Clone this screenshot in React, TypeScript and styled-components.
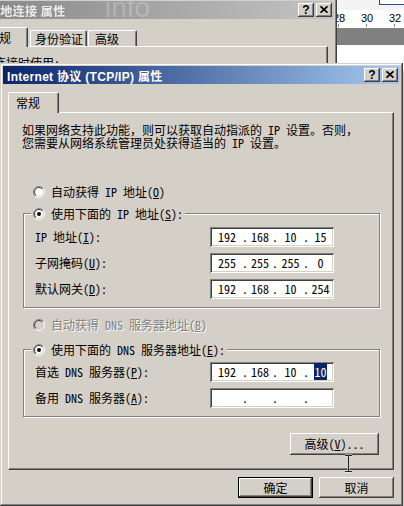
import React from "react";
import styled, { createGlobalStyle, css } from "styled-components";

const FACE = "#d4d0c8";
const UI_FONT = `"Noto Sans Mono CJK SC", "Noto Sans CJK SC", "Liberation Sans", sans-serif`;
const CAPTION_FONT = `"Liberation Sans", "Noto Sans CJK SC", sans-serif`;

const GlobalStyle = createGlobalStyle`
  *, *::before, *::after { box-sizing: border-box; }
  html, body { margin: 0; padding: 0; background: ${FACE}; }
  body { font-family: ${UI_FONT}; font-size: 12px; color: #000; }
`;

const raised = css`
  box-shadow: inset -1px -1px #404040, inset 1px 1px #ffffff, inset -2px -2px #808080, inset 2px 2px ${FACE};
`;
const sunken = css`
  box-shadow: inset 1px 1px #808080, inset -1px -1px #ffffff, inset 2px 2px #404040, inset -2px -2px ${FACE};
`;

const Desktop = styled.div`
  position: relative;
  width: 404px;
  height: 506px;
  overflow: hidden;
  background: ${FACE};
`;

/* ---------- window far behind, on the right (ruler) ---------- */
const SideWindow = styled.div`
  position: absolute;
  left: 325px;
  top: 0;
  width: 80px;
  height: 70px;
  background: #fff;
  display: flex;
  flex-direction: column;
`;
const SideTopStrip = styled.div`
  height: 10px;
  flex: none;
  display: flex;
  justify-content: flex-end;
  background: #f4f4f4;
`;
const SelectionBox = styled.div`
  width: 26px;
  height: 5px;
  border: 1px solid #24459c;
  border-top: none;
  background: #fff;
`;
const Ruler = styled.div`
  height: 18px;
  flex: none;
  display: grid;
  grid-template-columns: repeat(3, 28px);
  background: #fff;
`;
const RulerMark = styled.div`
  position: relative;
  text-align: center;
  font: 11px "Liberation Sans", sans-serif;
  line-height: 14px;
  padding-top: 1px;
  &::after {
    content: "";
    position: absolute;
    left: 13px;
    bottom: 1px;
    width: 1px;
    height: 3px;
    background: #808080;
  }
`;
const GrayBand = styled.div`
  height: 17px;
  flex: none;
  background: #808080;
`;

/* ---------- shared window parts ---------- */
const TitleBar = styled.div<{ $active?: boolean }>`
  position: relative;
  height: 18px;
  flex: none;
  display: flex;
  align-items: center;
  gap: 2px;
  padding: 0 2px 0 ${(p) => (p.$active ? 4 : 25)}px;
  background: ${(p) =>
    p.$active
      ? "linear-gradient(to right, #0a246a, #a6caf0)"
      : "linear-gradient(to right, #848484, #c4c4c4)"};
  overflow: hidden;
`;
const TitleText = styled.span<{ $active?: boolean }>`
  flex: 1;
  font: bold 12px ${CAPTION_FONT};
  letter-spacing: 0.3px;
  white-space: nowrap;
  color: ${(p) => (p.$active ? "#ffffff" : "#ececec")};
  ${(p) => !p.$active && "filter: blur(0.7px);"}
`;
const Watermark = styled.span`
  position: absolute;
  left: 142px;
  top: -9px;
  font: 28px "Liberation Sans", sans-serif;
  color: rgba(255, 255, 255, 0.22);
  pointer-events: none;
`;
const CaptionButton = styled.div`
  width: 16px;
  height: 14px;
  flex: none;
  background: ${FACE};
  ${raised};
  display: flex;
  align-items: center;
  justify-content: center;
  font: bold 12px "Liberation Sans", sans-serif;
  line-height: 1;
  color: #000;
  padding-bottom: 1px;
`;

const TabRow = styled.div<{ $h: number }>`
  position: relative;
  z-index: 1;
  flex: none;
  display: flex;
  align-items: flex-end;
  height: ${(p) => p.$h}px;
`;
const Tab = styled.div<{ $w: number; $h: number; $pad: number; $ml?: number; $selected?: boolean }>`
  width: ${(p) => p.$w}px;
  height: ${(p) => p.$h}px;
  margin-left: ${(p) => p.$ml ?? 0}px;
  margin-bottom: ${(p) => (p.$selected ? -1 : 0)}px;
  padding-left: ${(p) => p.$pad}px;
  display: flex;
  align-items: center;
  background: ${FACE};
  border-top: 1px solid #fff;
  border-left: 1px solid #fff;
  border-right: 1px solid #404040;
  border-radius: 2px 2px 0 0;
  box-shadow: inset -1px 0 #808080;
  line-height: 12px;
  white-space: nowrap;
`;
const TabPanel = styled.div`
  background: ${FACE};
  border-style: solid;
  border-width: 1px;
  border-color: #fff #404040 #404040 #fff;
  box-shadow: inset -1px -1px #808080;
  display: flex;
  flex-direction: column;
`;

/* ---------- background window ---------- */
const BackWindow = styled.div`
  position: absolute;
  left: -40px;
  top: -2px;
  width: 377px;
  height: 100px;
  padding: 3px;
  background: ${FACE};
  box-shadow: inset -1px -1px #404040, inset -2px -2px #808080;
  display: flex;
  flex-direction: column;
  z-index: 1;
`;
const BackBody = styled.div`
  flex: 1;
  display: flex;
  flex-direction: column;
  padding: 8px 6px 0 14px;
`;
const BackPanel = styled(TabPanel)`
  flex: 1;
  padding: 10px 0 0 16px;
`;
const BackCaption = styled.div`
  line-height: 12px;
  white-space: nowrap;
`;

/* ---------- front dialog ---------- */
const Dialog = styled.div`
  position: absolute;
  left: 0;
  top: 63px;
  width: 403px;
  height: 443px;
  padding: 3px;
  background: ${FACE};
  box-shadow: inset -1px -1px #404040, inset 1px 1px ${FACE}, inset -2px -2px #808080, inset 2px 2px #fff;
  display: flex;
  flex-direction: column;
  z-index: 2;
`;
const DialogBody = styled.div`
  display: flex;
  flex-direction: column;
  padding: 8px 6px 0 5px;
`;
const FrontPanel = styled(TabPanel)`
  height: 358px;
  padding: 10px 13px 0 13px;
`;
const Intro = styled.p`
  margin: 0;
  line-height: 13px;
  white-space: nowrap;
`;
const RadioRow = styled.div<{ $mt: number; $disabled?: boolean }>`
  display: flex;
  align-items: center;
  gap: 6px;
  height: 14px;
  margin-top: ${(p) => p.$mt}px;
  padding-left: 11px;
  line-height: 14px;
  white-space: nowrap;
  color: ${(p) => (p.$disabled ? "#808080" : "#000")};
  ${(p) => p.$disabled && "text-shadow: 1px 1px 0 #fff;"}
`;
const Group = styled.fieldset<{ $mt: number; $pt: number }>`
  margin: ${(p) => p.$mt}px 0 0 1px;
  padding: ${(p) => p.$pt}px 0 8px 11px;
  min-width: 0;
  border: 1px solid #808080;
  box-shadow: 1px 1px 0 #fff, inset 1px 1px 0 #fff;
`;
const GroupLegend = styled.legend`
  height: 14px;
  padding: 0 2px;
  margin-left: -4px;
  background: ${FACE};
`;
const LegendLabel = styled.span`
  display: inline-flex;
  align-items: center;
  gap: 6px;
  height: 14px;
  line-height: 14px;
  white-space: nowrap;
`;
const FieldGrid = styled.div`
  display: grid;
  grid-template-columns: 175px 124px;
  row-gap: 6px;
  align-items: center;
`;
const FieldLabel = styled.span`
  white-space: nowrap;
  line-height: 14px;
`;
const Key = styled.u`
  text-underline-offset: 1px;
`;
const IPBox = styled.div`
  width: 124px;
  height: 20px;
  background: #fff;
  ${sunken};
  display: grid;
  grid-template-columns: 30px 6px 24px 6px 25px 6px 23px;
  align-items: center;
  padding-left: 2px;
  line-height: 14px;
`;
const Octet = styled.span`
  text-align: center;
  white-space: nowrap;
`;
const Dot = styled.span`
  text-align: center;
`;
const Selection = styled.span`
  background: #0a246a;
  color: #fff;
`;
const AdvancedRow = styled.div`
  display: flex;
  justify-content: flex-end;
  margin: 16px 1px 0 0;
`;
const PushButton = styled.button<{ $w: number; $h: number; $default?: boolean }>`
  width: ${(p) => p.$w}px;
  height: ${(p) => p.$h}px;
  padding: 0;
  margin: 0;
  font: inherit;
  color: #000;
  background: ${FACE};
  display: flex;
  align-items: center;
  justify-content: center;
  line-height: 14px;
  white-space: nowrap;
  border: ${(p) => (p.$default ? "1px solid #000" : "none")};
  ${raised};
`;
const ButtonRow = styled.div`
  display: flex;
  justify-content: flex-end;
  gap: 6px;
  margin-top: 7px;
`;
const Cursor = styled.svg`
  position: absolute;
  left: 344px;
  top: 454px;
  z-index: 3;
`;

/* ---------- icons ---------- */
const RadioIcon: React.FC<{ checked?: boolean; disabled?: boolean }> = ({ checked, disabled }) => (
  <svg width="12" height="12" viewBox="0 0 12 12" style={{ flex: "none" }}>
    <defs>
      <linearGradient id="radioOuter" x1="0" y1="0" x2="1" y2="1">
        <stop offset="0.5" stopColor="#808080" />
        <stop offset="0.5" stopColor="#ffffff" />
      </linearGradient>
      <linearGradient id="radioInner" x1="0" y1="0" x2="1" y2="1">
        <stop offset="0.5" stopColor="#404040" />
        <stop offset="0.5" stopColor={FACE} />
      </linearGradient>
    </defs>
    <circle cx="6" cy="6" r="5.5" fill="none" stroke="url(#radioOuter)" strokeWidth="1" />
    <circle cx="6" cy="6" r="4.5" fill={disabled ? FACE : "#fff"} stroke="url(#radioInner)" strokeWidth="1" />
    {checked && <circle cx="6" cy="6" r="2" fill={disabled ? "#808080" : "#000"} />}
  </svg>
);

const CloseGlyph = () => (
  <svg width="8" height="7" viewBox="0 0 8 7">
    <path d="M0.5 0.3 L7.5 6.7 M7.5 0.3 L0.5 6.7" stroke="#000" strokeWidth="1.7" fill="none" />
  </svg>
);

const Caption: React.FC<{ title: string; active?: boolean; watermark?: string }> = ({ title, active, watermark }) => (
  <TitleBar $active={active}>
    <TitleText $active={active}>{title}</TitleText>
    {watermark && <Watermark>{watermark}</Watermark>}
    <CaptionButton>?</CaptionButton>
    <CaptionButton>
      <CloseGlyph />
    </CaptionButton>
  </TitleBar>
);

const IPAddress: React.FC<{ parts?: string[]; selectLast?: boolean }> = ({ parts = ["", "", "", ""], selectLast }) => (
  <IPBox>
    <Octet>{parts[0]}</Octet>
    <Dot>.</Dot>
    <Octet>{parts[1]}</Octet>
    <Dot>.</Dot>
    <Octet>{parts[2]}</Octet>
    <Dot>.</Dot>
    <Octet>{selectLast ? <Selection>{parts[3]}</Selection> : parts[3]}</Octet>
  </IPBox>
);

export default function App() {
  return (
    <>
      <GlobalStyle />
      <Desktop>
        <SideWindow>
          <SideTopStrip>
            <SelectionBox />
          </SideTopStrip>
          <Ruler>
            <RulerMark>28</RulerMark>
            <RulerMark>30</RulerMark>
            <RulerMark>32</RulerMark>
          </Ruler>
          <GrayBand />
        </SideWindow>

        <BackWindow>
          <Caption title="本地连接 属性" watermark="info" />
          <BackBody>
            <TabRow $h={19}>
              <Tab $selected $w={51} $h={20} $pad={9}>常规</Tab>
              <Tab $w={57} $h={16} $pad={4} $ml={2}>身份验证</Tab>
              <Tab $w={49} $h={16} $pad={6} $ml={1}>高级</Tab>
            </TabRow>
            <BackPanel>
              <BackCaption>连接时使用:</BackCaption>
            </BackPanel>
          </BackBody>
        </BackWindow>

        <Dialog>
          <Caption title="Internet 协议 (TCP/IP) 属性" active />
          <DialogBody>
            <TabRow $h={20}>
              <Tab $selected $w={51} $h={21} $pad={7}>常规</Tab>
            </TabRow>
            <FrontPanel>
              <Intro>
                如果网络支持此功能，则可以获取自动指派的 IP 设置。否则，
                <br />
                您需要从网络系统管理员处获得适当的 IP 设置。
              </Intro>

              <RadioRow $mt={36}>
                <RadioIcon />
                <span>
                  自动获得 IP 地址(<Key>O</Key>)
                </span>
              </RadioRow>

              <Group $mt={7} $pt={7}>
                <GroupLegend>
                  <LegendLabel>
                    <RadioIcon checked />
                    <span>
                      使用下面的 IP 地址(<Key>S</Key>):
                    </span>
                  </LegendLabel>
                </GroupLegend>
                <FieldGrid>
                  <FieldLabel>
                    IP 地址(<Key>I</Key>):
                  </FieldLabel>
                  <IPAddress parts={["192", "168", "10", "15"]} />
                  <FieldLabel>
                    子网掩码(<Key>U</Key>):
                  </FieldLabel>
                  <IPAddress parts={["255", "255", "255", "0"]} />
                  <FieldLabel>
                    默认网关(<Key>D</Key>):
                  </FieldLabel>
                  <IPAddress parts={["192", "168", "10", "254"]} />
                </FieldGrid>
              </Group>

              <RadioRow $mt={10} $disabled>
                <RadioIcon disabled />
                <span>
                  自动获得 DNS 服务器地址(<Key>B</Key>)
                </span>
              </RadioRow>

              <Group $mt={10} $pt={6}>
                <GroupLegend>
                  <LegendLabel>
                    <RadioIcon checked />
                    <span>
                      使用下面的 DNS 服务器地址(<Key>E</Key>):
                    </span>
                  </LegendLabel>
                </GroupLegend>
                <FieldGrid>
                  <FieldLabel>
                    首选 DNS 服务器(<Key>P</Key>):
                  </FieldLabel>
                  <IPAddress parts={["192", "168", "10", "10"]} selectLast />
                  <FieldLabel>
                    备用 DNS 服务器(<Key>A</Key>):
                  </FieldLabel>
                  <IPAddress />
                </FieldGrid>
              </Group>

              <AdvancedRow>
                <PushButton $w={89} $h={22}>
                  高级(<Key>V</Key>)...
                </PushButton>
              </AdvancedRow>
            </FrontPanel>

            <ButtonRow>
              <PushButton $w={75} $h={21} $default>
                确定
              </PushButton>
              <PushButton $w={75} $h={21}>
                取消
              </PushButton>
            </ButtonRow>
          </DialogBody>
        </Dialog>

        <Cursor width="9" height="19" viewBox="0 0 9 19">
          <path d="M1 1.5 H8 M4.5 1.5 V17.5 M1 17.5 H8" stroke="#fff" strokeWidth="3" fill="none" opacity="0.5" />
          <path d="M1 1.5 H8 M4.5 1.5 V17.5 M1 17.5 H8" stroke="#222" strokeWidth="1.2" fill="none" />
        </Cursor>
      </Desktop>
    </>
  );
}
